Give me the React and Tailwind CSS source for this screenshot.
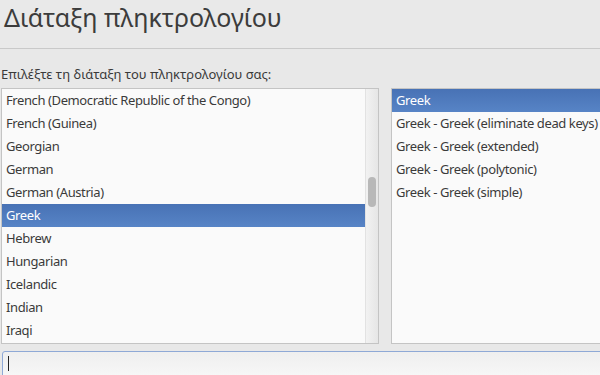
import React from 'react'

const layouts = [
  'French (Democratic Republic of the Congo)',
  'French (Guinea)',
  'Georgian',
  'German',
  'German (Austria)',
  'Greek',
  'Hebrew',
  'Hungarian',
  'Icelandic',
  'Indian',
  'Iraqi',
]

const variants = [
  'Greek',
  'Greek - Greek (eliminate dead keys)',
  'Greek - Greek (extended)',
  'Greek - Greek (polytonic)',
  'Greek - Greek (simple)',
]

const Row = ({ label, selected }) => (
  <div
    className={
      selected
        ? 'h-[23px] flex items-center pl-[4px] pt-[1px] text-white bg-gradient-to-b from-[#4872b5] to-[#5784c6]'
        : 'h-[23px] flex items-center pl-[4px] pt-[1px] text-[#3a3a3a]'
    }
  >
    <span className="whitespace-nowrap tracking-[-0.4px]">{label}</span>
  </div>
)

const App = () => {
  return (
    <div
      className="w-[600px] h-[375px] bg-[#e8e8e8] overflow-hidden flex flex-col text-[13px]"
      style={{ fontFamily: '"Noto Sans", "Open Sans", sans-serif' }}
    >
      {/* Header */}
      <header className="h-[49px] flex-shrink-0 border-b border-[#c9c9c9] bg-[#e9e9e9] px-[4px] pt-[1px]">
        <h1 className="text-[25px] leading-[32px] text-[#3c3c3c]">Διάταξη πληκτρολογίου</h1>
      </header>

      <div className="h-[39px] flex-shrink-0 flex items-center pt-[13px] pl-[1px] text-[#3a3a3a]">
        Επιλέξτε τη διάταξη του πληκτρολογίου σας:
      </div>

      {/* Lists */}
      <div className="flex gap-[12px] pl-[1px] h-[256px] flex-shrink-0">
        <div className="w-[378px] flex-shrink-0 h-full border border-[#c4c4c4] bg-[#fafafa] flex">
          <div className="flex-1 overflow-hidden">
            {layouts.map((l) => (
              <Row key={l} label={l} selected={l === 'Greek'} />
            ))}
          </div>
          <div className="w-[13px] h-full border-l border-[#e2e2e2] bg-gradient-to-r from-[#f2f2f2] to-[#e6e6e6] pt-[88px] flex justify-center">
            <div className="w-[8px] h-[30px] rounded-full bg-[#b8b8b8]" />
          </div>
        </div>
        <div className="w-[230px] flex-shrink-0 h-full border border-[#c4c4c4] bg-[#fafafa] overflow-hidden">
          {variants.map((v) => (
            <Row key={v} label={v} selected={v === 'Greek'} />
          ))}
        </div>
      </div>

      {/* Search input */}
      <div className="pt-[7px] pl-[2px]">
        <div className="w-[610px] h-[30px] rounded-[3px] border border-[#8fa9d6] bg-gradient-to-b from-[#efefef] to-[#f8f8f8] flex items-start pt-[4px] pl-[5px]">
          <div className="w-[1px] h-[15px] bg-[#222]" />
        </div>
      </div>
    </div>
  )
}

export default App
